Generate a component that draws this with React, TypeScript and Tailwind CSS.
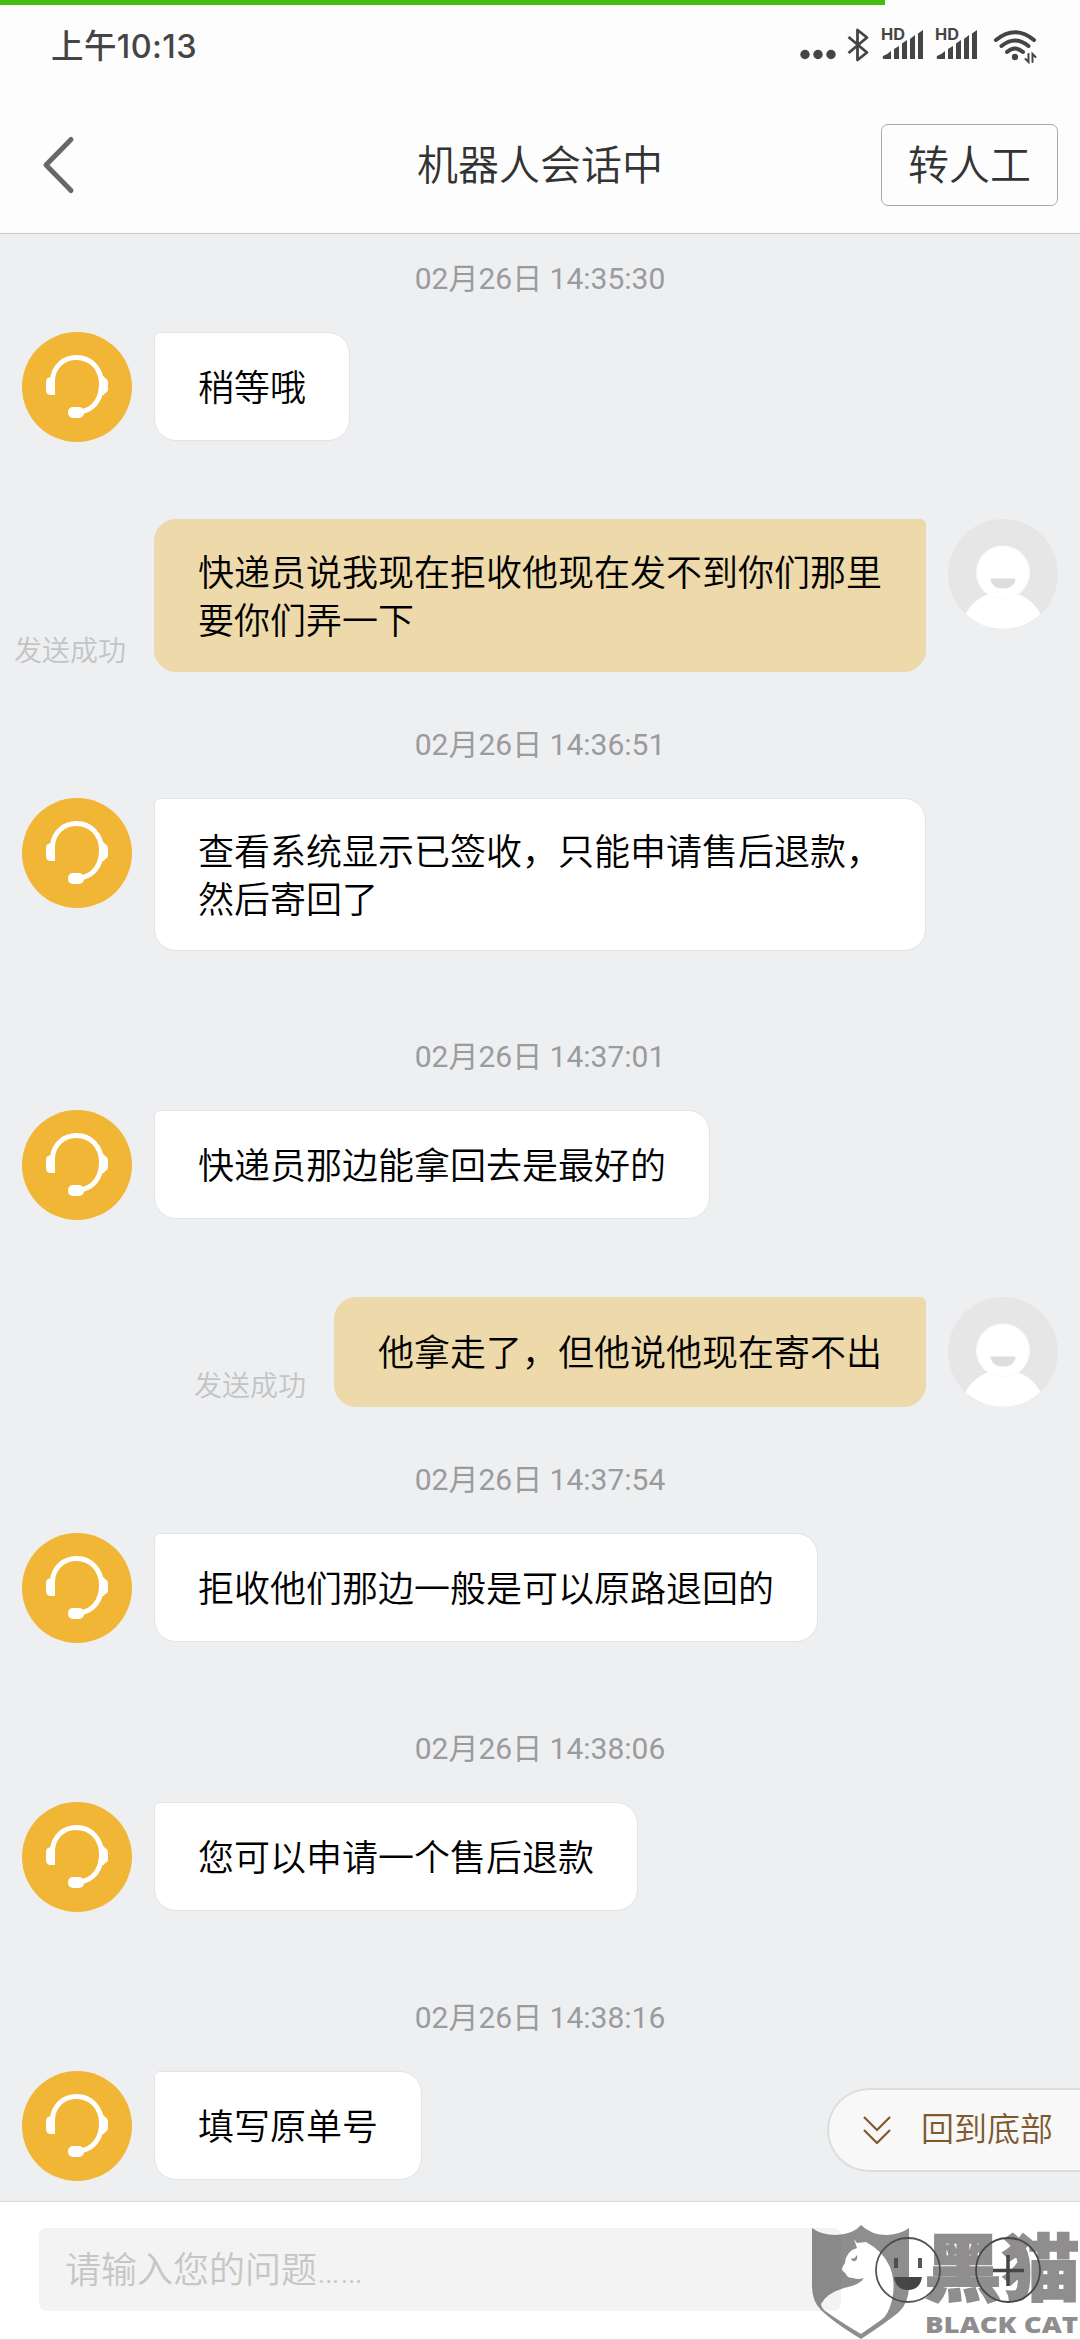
import React from "react";

type Message =
  | { kind: "time"; text: string }
  | { kind: "bot"; lines: string[]; cls: string }
  | { kind: "user"; lines: string[]; cls: string };

const messages: Message[] = [
  { kind: "time", text: "02月26日 14:35:30" },
  { kind: "bot", lines: ["稍等哦"], cls: "h-[187px]" },
  { kind: "user", lines: ["快递员说我现在拒收他现在发不到你们那里", "要你们弄一下"], cls: "h-[196px]" },
  { kind: "time", text: "02月26日 14:36:51" },
  { kind: "bot", lines: ["查看系统显示已签收，只能申请售后退款，", "然后寄回了"], cls: "h-[229px]" },
  { kind: "time", text: "02月26日 14:37:01" },
  { kind: "bot", lines: ["快递员那边能拿回去是最好的"], cls: "h-[187px]" },
  { kind: "user", lines: ["他拿走了，但他说他现在寄不出"], cls: "h-[153px]" },
  { kind: "time", text: "02月26日 14:37:54" },
  { kind: "bot", lines: ["拒收他们那边一般是可以原路退回的"], cls: "h-[186px]" },
  { kind: "time", text: "02月26日 14:38:06" },
  { kind: "bot", lines: ["您可以申请一个售后退款"], cls: "h-[186px]" },
  { kind: "time", text: "02月26日 14:38:16" },
  { kind: "bot", lines: ["填写原单号"], cls: "h-[150px]" },
];

function BotAvatar() {
  return (
    <svg viewBox="0 0 110 110" className="size-[110px] shrink-0">
      <circle cx="55" cy="55" r="55" fill="#f1b636" />
      <path d="M30.500 48C31.500 34 42 25.500 54.500 25.500C69 25.500 79.500 37 79.500 52C79.500 68 71 78 58 80" fill="none" stroke="#fff" strokeWidth="5" />
      <path d="M33 44.500V63H29Q24 63 24 58V50Q24 45.500 28 45.500L29 44.500Z" fill="#fff" />
      <path d="M78.500 44H81.500L83 46Q86 47 86 51V57Q86 60 83 61L82 63H77Z" fill="#fff" />
      <rect x="46" y="75" width="16" height="11" rx="5" fill="#fff" />
    </svg>
  );
}

function UserAvatar() {
  return (
    <svg viewBox="0 0 110 110" className="size-[110px] shrink-0">
      <circle cx="55" cy="55" r="55" fill="#e6e6e6" />
      <path d="M17.500 95C25 81 38 73 55 73S85 81 92.500 95A55 55 0 0 1 17.500 95Z" fill="#fff" />
      <circle cx="55" cy="53.500" r="27" fill="#fbfbfb" />
      <circle cx="55" cy="53.500" r="25.500" fill="#fff" />
      <path d="M44 59.500H66Q68 59.500 67.500 61.500Q65 69.500 55 69.500T42.500 61.500Q42 59.500 44 59.500Z" fill="#dedede" />
    </svg>
  );
}

function Row({ m }: { m: Message }) {
  if (m.kind === "time")
    return (
      <div className="mt-[10px] mb-[33px] h-10 text-center text-[30px] leading-10 text-[#9a9b9c]">{m.text}</div>
    );
  const text = m.lines.map((l) => (
    <div key={l} className="whitespace-nowrap">{l}</div>
  ));
  const pad = m.lines.length > 1 ? "pt-[30px] pb-[25px]" : m.kind === "bot" ? "pt-[32px] pb-[27px]" : "pt-[32px] pb-[28px]";
  if (m.kind === "bot")
    return (
      <div className={`flex items-start gap-[22px] pl-[22px] ${m.cls}`}>
        <BotAvatar />
        <div className={`rounded-[22px] rounded-tl-[6px] border border-[#e2e3e4] bg-white px-[43px] text-[36px] leading-[48px] font-[350] text-black ${pad}`}>{text}</div>
      </div>
    );
  return (
    <div className={`flex items-start justify-end pr-[22px] ${m.cls}`}>
      <div className="flex items-end">
        <span className="mr-[28px] text-[28px] leading-[40px] font-[350] text-[#c3c4c5]">发送成功</span>
        <div className={`rounded-[22px] rounded-tr-[6px] border border-[#ead8b0] bg-[#edd9aa] px-[43px] text-[36px] leading-[48px] font-[350] text-black ${pad}`}>{text}</div>
      </div>
      <div className="ml-[22px]">
        <UserAvatar />
      </div>
    </div>
  );
}

function Signal() {
  return (
    <svg viewBox="0 0 44 36" className="h-9 w-11 overflow-visible">
      <text x="0" y="12" fontSize="15.500" fontWeight="700" fontFamily="Inter" textLength="24" lengthAdjust="spacingAndGlyphs">HD</text>
      <path d="M2 28Q7 26 10 23V31H3Q1 31 2 28Z M13 21L18 18V31H13Z M21 15.500L26 12V31H21Z M29 11L34 7V31H29Z M37 5.500L42 2V31H37Z" />
    </svg>
  );
}

function StatusBar() {
  return (
    <div className="flex h-[84px] items-start justify-between pt-6 pr-[43px] pl-[51px] text-[#454545]">
      <span className="pt-[2px] font-['Inter','Noto_Sans_CJK_SC',sans-serif] text-[32.500px] leading-[42px] font-medium tracking-[0.400px]">上午10:13</span>
      <div className="flex items-start fill-current pt-[4px]">
        <svg viewBox="0 0 36 36" className="mr-[11px] size-9">
          <circle cx="5" cy="26.500" r="4.700" />
          <circle cx="18" cy="26.500" r="4.700" />
          <circle cx="31" cy="26.500" r="4.700" />
        </svg>
        <svg viewBox="0 0 22 36" className="mr-[12px] h-9 w-[22px]" fill="none" stroke="currentColor" strokeWidth="2.800" strokeLinejoin="round">
          <path d="M1.500 9L20 24.500L10.500 32V2L20 9.500L1.500 25" />
        </svg>
        <div className="mr-[10px]"><Signal /></div>
        <div className="mr-[14px]"><Signal /></div>
        <svg viewBox="0 0 44 36" className="h-9 w-11" fill="none" stroke="currentColor" strokeWidth="4" strokeLinecap="round">
          <path d="M3 12Q22 -3.500 41 12M8.500 18Q22 7 35.500 18M14 24Q22 17 30 24" />
          <circle cx="22" cy="29" r="3.200" fill="currentColor" stroke="none" />
          <path d="M35.500 26V34L32.500 31M39.500 34V26L42.500 29" strokeWidth="2" />
        </svg>
      </div>
    </div>
  );
}

function Header() {
  return (
    <header className="flex h-[150px] items-center justify-between border-b border-[#c8c9ca] pt-[13px] pr-[22px] pl-[40px]">
      <svg viewBox="0 0 36 60" className="h-[60px] w-[159px]" preserveAspectRatio="xMinYMid" fill="none" stroke="#666867" strokeWidth="5" strokeLinecap="round" strokeLinejoin="round">
        <path d="M31 4.500L6 30L31 55.500" />
      </svg>
      <h1 className="pt-[2px] text-[41px] leading-[60px] font-[350] text-[#333]">机器人会话中</h1>
      <button className="h-[82px] w-[177px] rounded-[7px] border border-[#a8a9aa] pt-px text-[41px] leading-[78px] font-[350] text-[#333]">转人工</button>
    </header>
  );
}

function Composer() {
  return (
    <footer className="relative flex h-[139px] items-start border-t border-[#d9dadb] bg-white pt-[26px] pl-[39px]">
      <div className="h-[83px] w-[802px] rounded-[8px] bg-[#f3f3f3] pt-[2px] pl-[26px] text-[36px] leading-[83px] font-[350] text-[#c6c6c6]">请输入您的问题……</div>
      <svg viewBox="0 0 66 66" className="mt-[9px] ml-[34px] size-[66px]" fill="none" stroke="#555" strokeWidth="1.800">
        <circle cx="33" cy="33" r="32" />
        <path d="M21 21V31M45 21V31" strokeWidth="4" />
        <path d="M19 40H47Q45 53 33 53T19 40Z" fill="#444" stroke="none" />
      </svg>
      <svg viewBox="0 0 66 66" className="mt-[9px] ml-[34px] size-[66px]" fill="none" stroke="#444" strokeWidth="1.800">
        <circle cx="33" cy="33" r="32" />
        <path d="M33 18V49M18 33.500H49" strokeWidth="3.500" />
      </svg>
      <Watermark />
      <div className="absolute right-0 bottom-0 left-0 h-px bg-[#d9dadb]" />
    </footer>
  );
}

function Watermark() {
  return (
    <svg viewBox="0 0 270 117" className="absolute top-[22px] left-[811px] h-[117px] w-[270px] overflow-visible">
      <g opacity="0.620">
        <path fillRule="evenodd" fill="#4b4949" d="M1 4Q10 11 25 11Q43 10 50 1Q60 11 76 11Q90 10 98 4V62Q98 78 88 88Q76 98 50 115Q22 98 10 86Q1 77 1 62Z M43 15L46 19L55 18Q72 27 79 43Q85 59 81 76Q77 92 70 96L50 110Q25 95 13 86Q10 83 10 80Q16 69 33 64Q49 61 53 54Q47 56 42 54Q36 54 35 50L31 46Q31 43 34 39Q35 27 46 24Z" />
        <path d="M40 34Q43 36 46 31Q47 36 44 37Q41 38 40 34Z" fill="#4b4949" />
        <text x="113" y="71" fontFamily="Noto Sans CJK SC" fontWeight="900" fontSize="73" textLength="156" lengthAdjust="spacingAndGlyphs" fill="#4b4949" stroke="#4b4949" strokeWidth="1.500">黑猫</text>
        <text x="114" y="108.500" fontFamily="Open Sans" fontWeight="800" fontSize="23" textLength="153" lengthAdjust="spacingAndGlyphs" fill="#4b4949">BLACK CAT</text>
      </g>
    </svg>
  );
}

export default function App() {
  return (
    <div className="relative flex h-[2340px] w-[1080px] flex-col overflow-hidden bg-[#fdfdfd] font-['Roboto','Noto_Sans_CJK_SC',sans-serif]">
      <div className="absolute top-0 left-0 h-[5px] w-[885px] bg-[#46bd0e]" />
      <StatusBar />
      <Header />
      <main className="relative flex-1 overflow-hidden bg-[#eeeff1] pt-[15px]">
        {messages.map((m, i) => (
          <Row key={i} m={m} />
        ))}
        <button className="absolute right-0 bottom-[29px] flex h-[84px] w-[253px] items-center rounded-l-full border-2 border-r-0 border-[#dcddde] bg-[#f8f8f8] pl-[34px] text-[33px] text-[#80592f]">
          <svg viewBox="0 0 28 28" className="mr-[30px] size-7" fill="none" stroke="currentColor" strokeWidth="2.200">
            <path d="M1 1L14 14L27 1M1 14L14 27L27 14" />
          </svg>
          <span className="font-[350]">回到底部</span>
        </button>
      </main>
      <Composer />
    </div>
  );
}
